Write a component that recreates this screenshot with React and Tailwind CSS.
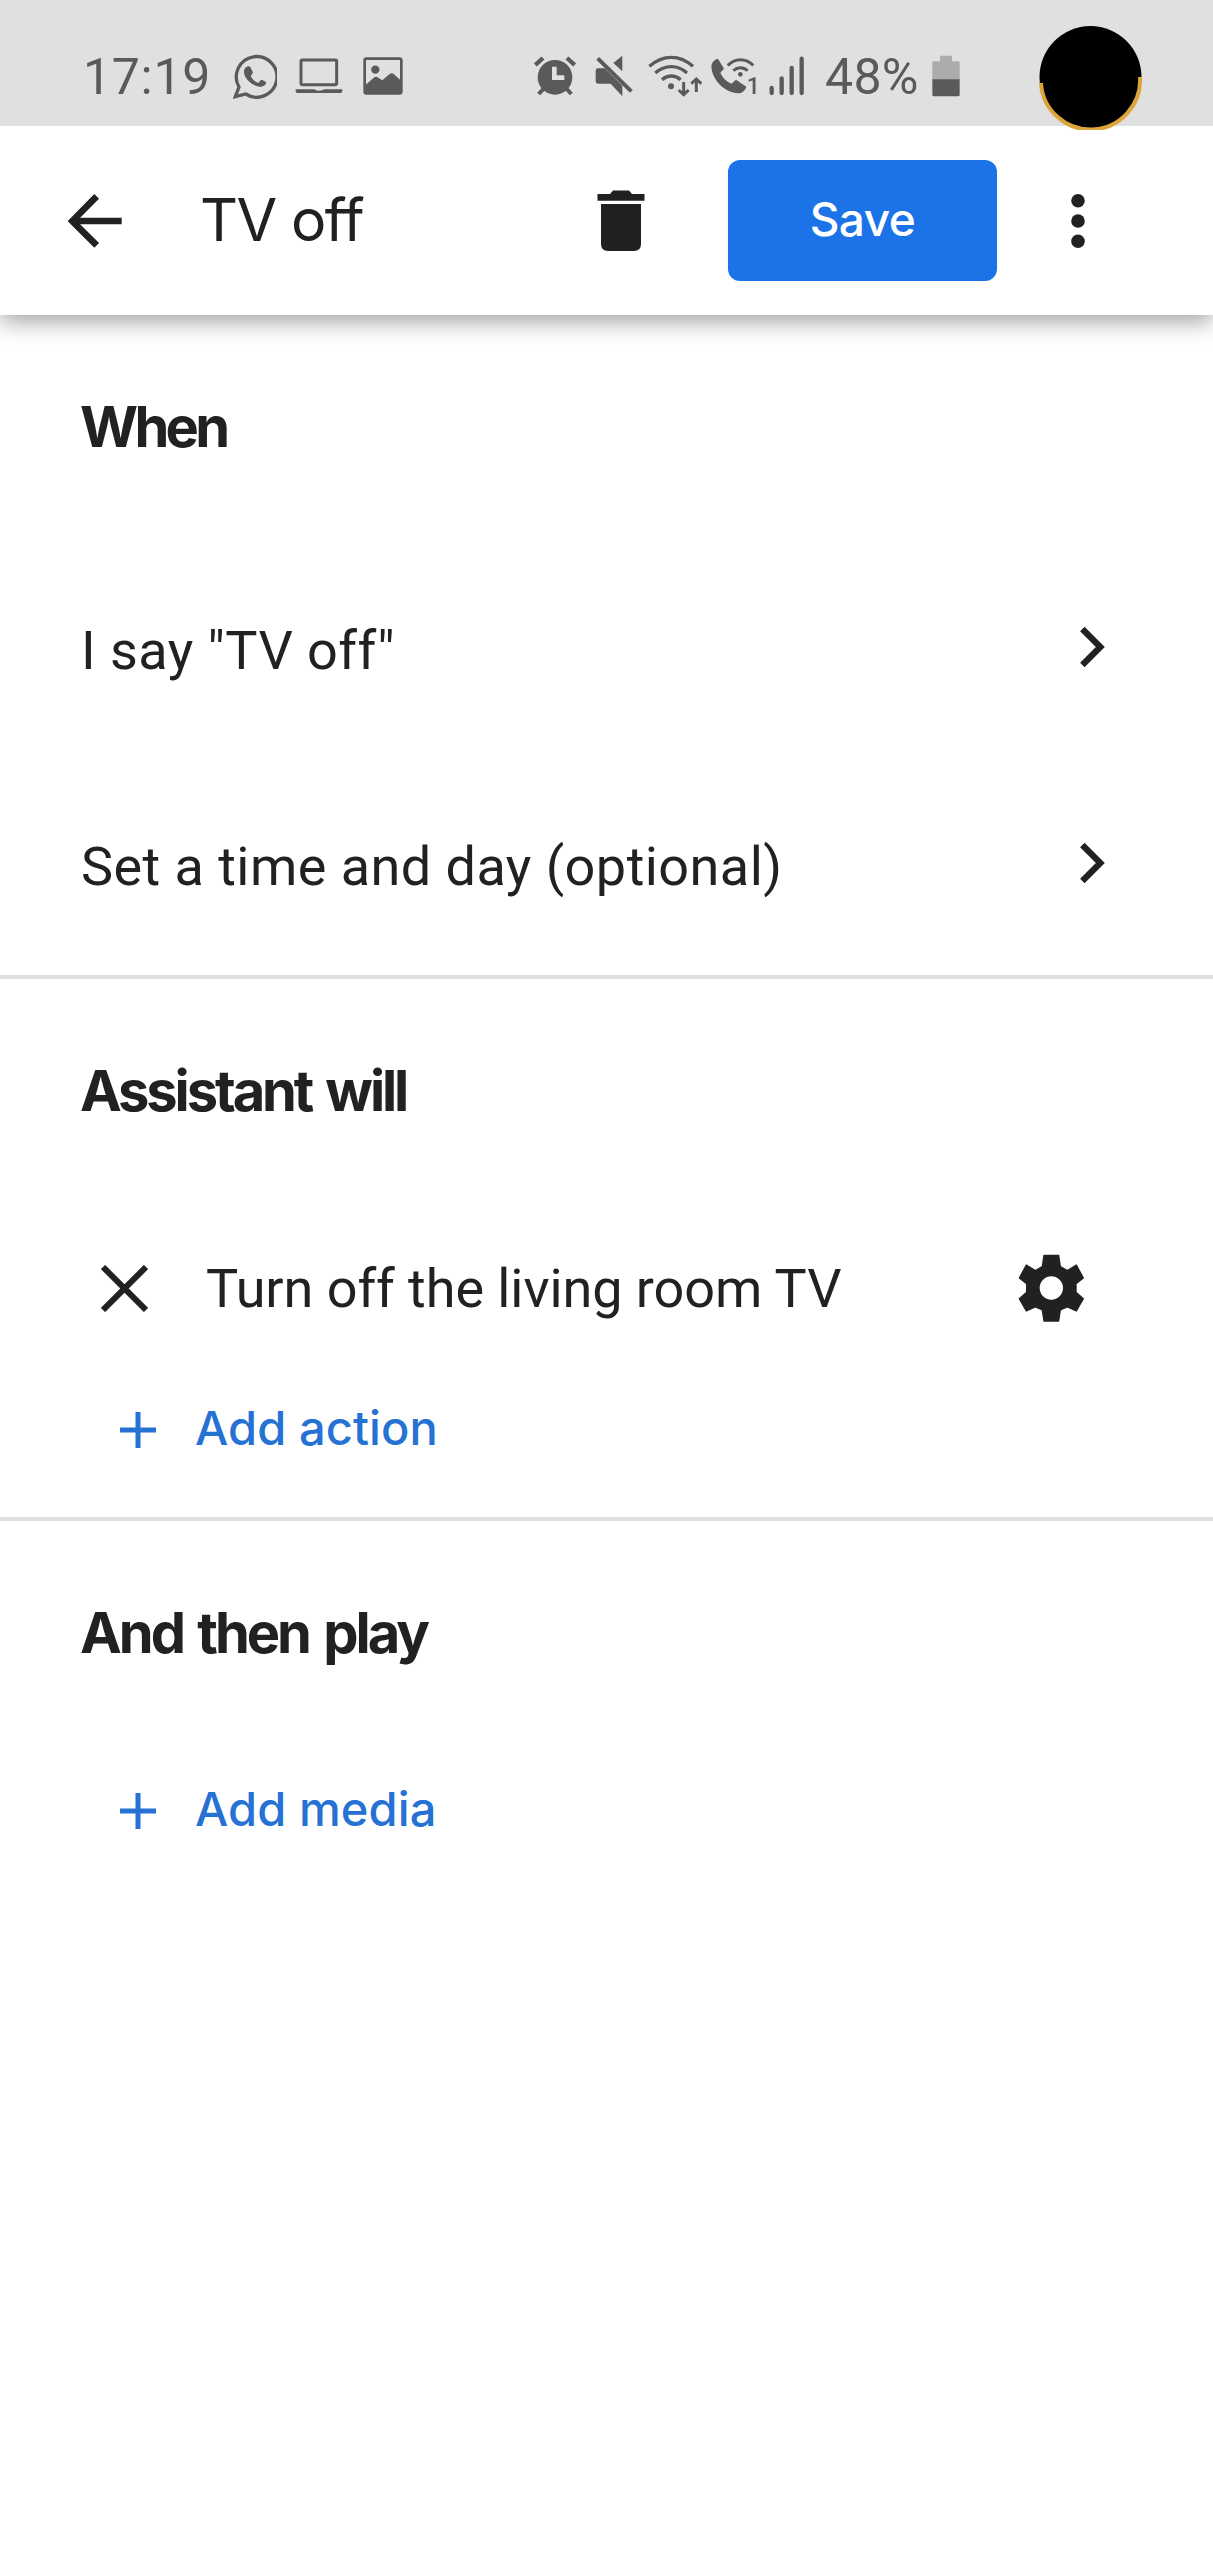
import React from 'react';

const WhatsAppIcon = () => (
    <svg className="w-11 h-[45px]" viewBox="520 100 132 135" fill="none">
        <path d="M527 228 L538 199 A61 61 0 1 1 558 220 Z" stroke="#5a5a5a" strokeWidth="10" strokeLinejoin="miter" />
        <path
            d="M560 139 C565 135 571 136 573 141 L579 153 C581 158 576 161 573 165 C577 175 585 182 595 187 C599 184 602 176 608 178 L619 184 C620 191 615 197 605 198 C580 199 551 173 553 150 C554 145 557 141 560 139 Z"
            fill="#5a5a5a"
        />
    </svg>
);

const LaptopIcon = () => (
    <svg className="w-12 h-9" viewBox="706 115 144 108">
        <rect x="724" y="121" width="107" height="74" rx="4" fill="none" stroke="#5a5a5a" strokeWidth="9" />
        <path d="M708 209 H764 Q768 213 778 213 Q790 213 794 209 H848 V213 Q848 220 840 220 H716 Q708 220 708 213 Z" fill="#5a5a5a" />
    </svg>
);

const ImageIcon = () => (
    <svg className="w-10 h-[38px]" viewBox="910 109 120 114">
        <rect x="915" y="114" width="110" height="104" rx="5" fill="none" stroke="#5a5a5a" strokeWidth="8" />
        <circle cx="947" cy="147" r="12.500" fill="#5a5a5a" />
        <path d="M915 195 L944 170 Q950 166 956 171 L968 179 L989 161 Q996 155 1003 161 L1025 181 V218 H915 Z" fill="#5a5a5a" />
    </svg>
);

const AlarmIcon = () => (
    <svg className="w-[42px] h-10" viewBox="74 107 126 120" stroke="#5a5a5a" fill="none">
        <circle cx="137" cy="171" r="52" fill="#5a5a5a" stroke="none" />
        <path d="M78 134 L101 113 M173 113 L196 134" strokeWidth="13" />
        <path d="M103 205 L88 221 M171 205 L186 221" strokeWidth="12" />
        <path d="M135 139 V172 H165" stroke="#e0e0e0" strokeWidth="14" />
    </svg>
);

const MuteIcon = () => (
    <svg className="w-[38px] h-[42px]" viewBox="255 104 114 126" fill="#5a5a5a">
        <path d="M337 106 V153 L310 128 Z" />
        <path d="M264 144 H284 L337 196 V228 L302 190 H264 Q257 190 257 183 V151 Q257 144 264 144 Z" />
        <path d="M263 114 L364 213" fill="none" stroke="#5a5a5a" strokeWidth="12" />
    </svg>
);

const WifiIcon = () => (
    <svg className="w-[54px] h-[42px]" viewBox="413 103 162 126" fill="none" stroke="#5a5a5a" strokeWidth="10">
        <path d="M417 137 Q448 110 483 110 Q518 110 548 137" />
        <path d="M435 157 Q457 138 483 138 Q509 138 530 157" />
        <path d="M455 177 Q468 166 483 166 Q498 166 511 177" />
        <circle cx="482" cy="197" r="9" fill="#5a5a5a" stroke="none" />
        <path d="M520 184 V221 M505 208 L520 222 L535 208" strokeWidth="9" />
        <path d="M558 214 V176 M543 189 L558 175 L573 189" strokeWidth="9" />
    </svg>
);

const WifiCallIcon = () => (
    <svg className="w-[46px] h-10 overflow-visible" viewBox="604 108 138 120" fill="none" stroke="#5a5a5a" strokeWidth="9">
        <path
            d="M625 116 L643 146 L632 158 C638 173 649 184 665 191 L679 179 L710 200 C706 213 696 220 685 220 C645 218 607 181 605 139 C606 127 614 118 625 116 Z"
            fill="#5a5a5a"
            stroke="none"
        />
        <path d="M654 136 Q672 119 692 119 Q714 119 731 136" />
        <path d="M671 152 Q681 143 692 143 Q704 143 714 152" />
        <circle cx="692" cy="163" r="7" fill="#5a5a5a" stroke="none" />
        {/* SIM number */}
        <text x="711" y="221" fill="#5a5a5a" stroke="none" className="font-medium text-[69px]">1</text>
    </svg>
);

const SignalIcon = () => (
    <svg className="w-9 h-10" viewBox="776 111 108 120" stroke="#5a5a5a" strokeWidth="13" strokeLinecap="round">
        <path d="M784 207 V222 M814 178 V222 M844 147 V222 M874 119 V222" />
    </svg>
);

const BatteryIcon = () => (
    <svg className="w-7 h-[42px]" viewBox="456 134 84 126">
        <path d="M480 136 H516 V153 H534 Q539 153 539 158 V208 H457 V158 Q457 153 462 153 H480 Z" fill="#acacac" />
        <path d="M457 207 H539 V253 Q539 258 534 258 H462 Q457 258 457 253 Z" fill="#5a5a5a" />
    </svg>
);

const BackIcon = () => (
    <svg className="w-[54px] h-[54px]" viewBox="83 161 162 162" fill="none" stroke="#212121">
        <path d="M244 242 H98" strokeWidth="20" />
        <path d="M169 168 L96 242 L169 315" strokeWidth="20" />
    </svg>
);

const TrashIcon = () => (
    <svg className="w-12 h-[62px]" viewBox="0 0 48 62" fill="#212121">
        <path d="M0.500 4 H13 L16 0.500 H32 L35 4 H47.500 V10.700 H0.500 Z" />
        <path d="M4 14 H44 V54 Q44 61 37 61 H11 Q4 61 4 54 Z" />
    </svg>
);

const MoreIcon = () => (
    <svg className="w-4 h-14" viewBox="0 0 16 56" fill="#212121">
        <circle cx="8" cy="7.800" r="6.800" />
        <circle cx="8" cy="28" r="6.800" />
        <circle cx="8" cy="48.200" r="6.800" />
    </svg>
);

const ChevronIcon = () => (
    <svg className="w-[25px] h-10 shrink-0" viewBox="301 83 75 120" fill="none" stroke="#212121" strokeWidth="19">
        <path d="M308 89 L362 143 L308 197" />
    </svg>
);

const CloseIcon = () => (
    <svg className="w-[47px] h-[47px]" viewBox="64 104 141 141" stroke="#212121" strokeWidth="18">
        <path d="M70 110 L199 239 M199 110 L70 239" />
    </svg>
);

const GearIcon = () => (
    <svg className="w-[67px] h-[68px]" viewBox="114 73 201 204">
        <path
            fillRule="evenodd"
            stroke="#212121"
            strokeWidth="4"
            strokeLinejoin="round"
            fill="#212121"
            d="M192 77 H236 L241 111 L262 123 L289 106 L310 145 L288 162 V188 L310 207 L289 244 L262 232 L241 241 L236 274 H192 L187 241 L166 232 L139 244 L118 207 L140 188 V162 L118 145 L139 106 L166 123 L187 111 Z M214 138 A37 37 0 1 0 214 212 A37 37 0 1 0 214 138 Z"
        />
    </svg>
);

const PlusIcon = () => (
    <svg className="w-9 h-9" viewBox="0 0 36 36" stroke="#2571d4" strokeWidth="5">
        <path d="M18 0 V36 M0 18 H36" />
    </svg>
);

const StatusBar = () => (
    <div className="relative z-20 h-[126px] bg-[#e0e0e0] flex items-center pt-[26px] text-[#5a5a5a]">
        <span className="ml-[83px] w-[150px] pt-0.5 text-[50px] leading-none tracking-[0.7px] whitespace-nowrap">17:19</span>
        <WhatsAppIcon />
        <div className="ml-[18px]"><LaptopIcon /></div>
        <div className="ml-5"><ImageIcon /></div>
        <div className="ml-[131px]"><AlarmIcon /></div>
        <div className="ml-[19px]"><MuteIcon /></div>
        <div className="ml-[15px]"><WifiIcon /></div>
        <div className="ml-[9px]"><WifiCallIcon /></div>
        <div className="ml-[12px]"><SignalIcon /></div>
        <span className="ml-[20px] w-[107px] pt-0.5 text-[50px] leading-none tracking-[0.3px] whitespace-nowrap">48%</span>
        <BatteryIcon />
        {/* Camera cutout with the charge ring */}
        <svg className="absolute left-[1038px] top-[25px] w-[105px] h-[105px]" viewBox="0 0 105 105">
            <circle cx="52.500" cy="52" r="51" fill="#000" />
            <path d="M3 58 A49.500 49.500 0 0 0 102 52" fill="none" stroke="#dba53a" strokeWidth="4" />
        </svg>
    </div>
);

const Header = () => (
    <header className="relative z-10 h-[189px] bg-white flex items-center shadow-[0_6px_22px_rgba(0,0,0,0.38)]">
        <button className="ml-[68px]"><BackIcon /></button>
        <h1 className="ml-[78px] pb-0.5 w-[397px] font-['Inter'] text-[59px] leading-none tracking-[-1.5px] whitespace-nowrap">TV off</h1>
        <button><TrashIcon /></button>
        <button className="ml-[83px] w-[269px] h-[121px] pb-1 rounded-xl bg-[#1c73e8] text-white font-['Inter'] font-medium text-[46px] leading-none tracking-[-0.5px]">
            Save
        </button>
        <button className="ml-[73px]"><MoreIcon /></button>
    </header>
);

const SectionTitle = ({ children, tracking }) => (
    <h2 className={`pt-20 pl-[80px] h-36 font-['Inter'] font-bold text-[56px] leading-[64px] whitespace-nowrap [word-spacing:4px] ${tracking}`}>
        {children}
    </h2>
);

const ConditionRow = ({ label }) => (
    <div className="h-[216px] pl-[81px] pr-[108px] flex items-center justify-between">
        <span className="pt-[7px] text-[54px] leading-none tracking-[0.45px] whitespace-nowrap">{label}</span>
        <ChevronIcon />
    </div>
);

const AddButton = ({ label }) => (
    <button className="h-[100px] pl-[120px] flex items-center gap-[39px] text-[#2571d4]">
        <PlusIcon />
        <span className="pb-1.5 font-['Inter'] font-medium text-[47px] leading-none tracking-[0.1px] whitespace-nowrap">{label}</span>
    </button>
);

export default function App() {
    return (
        <div className="w-[1213px] h-[2560px] overflow-hidden bg-white text-[#212121] font-['Roboto',sans-serif]">
            <StatusBar />
            <Header />
            <section className="h-[664px] border-b-4 border-[#e0e0e0]">
                <SectionTitle tracking="tracking-[-3.7px]">When</SectionTitle>
                <div className="mt-20">
                    <ConditionRow label={'I say "TV off"'} />
                    <ConditionRow label="Set a time and day (optional)" />
                </div>
            </section>
            <section className="h-[542px] border-b-4 border-[#e0e0e0]">
                <SectionTitle tracking="tracking-[-3.1px]">Assistant will</SectionTitle>
                <div className="mt-[97px] h-[136px] pl-[101px] pr-[128px] flex items-center">
                    <CloseIcon />
                    <span className="ml-[58px] pt-0.5 flex-1 text-[54px] leading-none tracking-[-0.07px] whitespace-nowrap">Turn off the living room TV</span>
                    <GearIcon />
                </div>
                <div className="mt-6">
                    <AddButton label="Add action" />
                </div>
            </section>
            <section>
                <SectionTitle tracking="tracking-[-3px]">And then play</SectionTitle>
                <div className="mt-24">
                    <AddButton label="Add media" />
                </div>
            </section>
        </div>
    );
}
